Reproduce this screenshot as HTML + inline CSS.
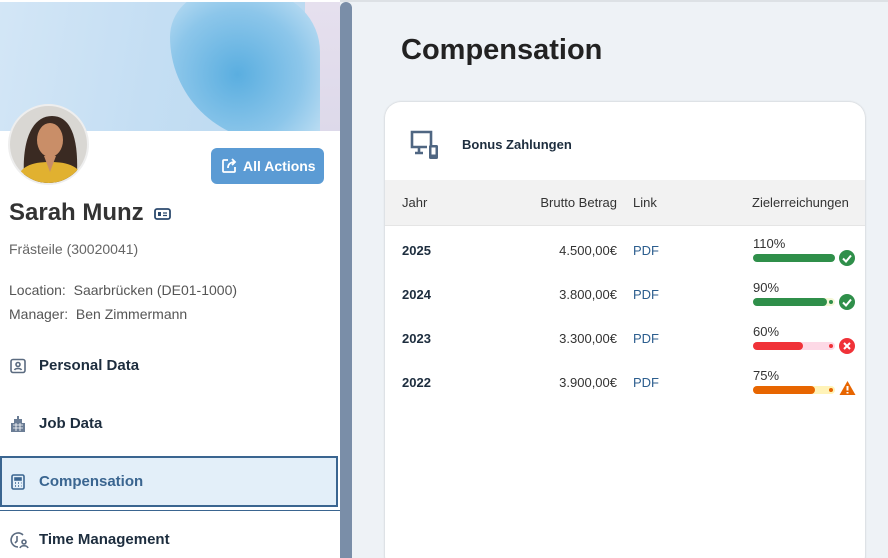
<!DOCTYPE html>
<html><head><meta charset="utf-8"><style>
*{box-sizing:border-box;margin:0;padding:0}
html,body{width:888px;height:558px;overflow:hidden}
body{font-family:"Liberation Sans",sans-serif;background:#eef2f6;position:relative;color:#1d2d3e}
#left{position:absolute;left:0;top:0;width:340px;height:558px;background:#fff;overflow:hidden}
#hdr{position:absolute;left:0;top:2px;width:340px;height:129px;background:linear-gradient(100deg,#d3e6f6 0%,#c4def3 45%,#b9d8f0 100%);overflow:hidden}
#ice{position:absolute;left:170px;top:-10px;width:150px;height:150px;background:radial-gradient(ellipse at 45% 55%,#5aaee0,#8cc6ea 55%,#cfe6f6);border-radius:30% 40% 0 70%}
#sky{position:absolute;left:305px;top:0;width:35px;height:129px;background:linear-gradient(#e6e0ee,#ddd9ea)}
#sb{position:absolute;left:340px;top:2px;width:12px;height:556px;background:#7a8ea8;border-radius:6px 6px 0 0}
#av{position:absolute;left:8px;top:104px;width:81px;height:81px;border-radius:50%;overflow:hidden;border:2px solid #eee;background:#d9d7d3}
#btn{position:absolute;left:211px;top:148px;width:113px;height:36px;background:#5b9bd4;border-radius:6px;color:#fff;font-weight:bold;font-size:14px;line-height:36px;padding-left:32px}
#btn svg{position:absolute;left:10px;top:10px}
.t{position:absolute;white-space:nowrap}
.nav{position:absolute;left:0;width:340px;height:52px;font-weight:bold;font-size:15px;line-height:52px;padding-left:39px}
.nav svg{position:absolute;left:9px;top:17px}
#card{position:absolute;left:385px;top:102px;width:480px;height:470px;background:#fff;border-radius:16px;box-shadow:0 0 2px rgba(0,0,0,.2)}
#th{position:absolute;left:0;top:78px;width:480px;height:46px;background:#f2f2f2;border-bottom:1px solid #e5e5e5;font-size:13px;color:#333}
.row{position:absolute;left:0;width:480px;height:44px;font-size:13px}
.bar{position:absolute;left:368px;height:8px;border-radius:4px}
</style></head><body>
<div style="position:absolute;left:0;top:0;width:888px;height:2px;background:#dde1e5"></div>
<div id="left">
<div id="hdr"><div id="sky"></div><div id="ice"></div></div>
<div id="av"><svg width="81" height="81" viewBox="0 0 81 81"><path d="M15 81C10 40 20 10 42 10S70 40 66 81z" fill="#3a2a22"/><ellipse cx="40" cy="34" rx="13" ry="17" fill="#c98e68"/><path d="M5 81c2-20 15-25 35-25s33 5 36 25z" fill="#e1b130"/><path d="M34 50h12l-6 16z" fill="#c98e68"/></svg></div>
<div id="btn"><svg width="16" height="16" viewBox="0 0 16 16" fill="none" stroke="#fff" stroke-width="1.8"><path d="M7 2H3a1 1 0 0 0-1 1v10a1 1 0 0 0 1 1h10a1 1 0 0 0 1-1V9"/><path d="M7 10c0-4 3-6 7-6M11 1l3 3-3 3"/></svg>All Actions</div>
<div class="t" style="left:9px;top:199px;font-size:24px;font-weight:bold;color:#333">Sarah Munz</div>
<svg class="t" style="left:154px;top:208px" width="17" height="12" viewBox="0 0 17 12"><rect x="1" y="1" width="15" height="10" rx="2" fill="none" stroke="#2c4a6e" stroke-width="1.8"/><rect x="4" y="4" width="3" height="4" fill="#2c4a6e"/><path d="M9 5h4M9 7.5h4" stroke="#2c4a6e" stroke-width="1.3"/></svg>
<div class="t" style="left:9px;top:241px;font-size:14px;color:#666">Frästeile (30020041)</div>
<div class="t" style="left:9px;top:282px;font-size:14px;color:#555">Location:&nbsp; Saarbrücken (DE01-1000)</div>
<div class="t" style="left:9px;top:306px;font-size:14px;color:#555">Manager:&nbsp; Ben Zimmermann</div>
<div class="nav" style="top:340px"><svg width="18" height="16" viewBox="0 0 18 16" fill="none" stroke="#5b6b80" stroke-width="1.6" style="top:18px"><rect x="2" y="1.5" width="14" height="13" rx="2"/><circle cx="9" cy="6.5" r="2"/><path d="M5.5 12c1-2 6-2 7 0"/></svg>Personal Data</div>
<div class="nav" style="top:398px"><svg width="18" height="18" viewBox="0 0 18 18" fill="#6b7d95" style="top:17px"><path d="M8 1h2v3h3v4h3v9H2V8h3V4h3z"/><path d="M4 10h10M4 13h10M7 8v8M11 8v8" stroke="#fff" stroke-width=".8"/></svg>Job Data</div>
<div class="nav" style="top:456px;background:#e3eff9;border:2px solid #3a6590;color:#3a6590;height:51px;line-height:47px;width:338px;padding-left:37px"><svg width="14" height="16" viewBox="0 0 14 16" fill="none" stroke="#3a6590" stroke-width="1.6" style="top:16px;left:9px"><rect x="1" y="1" width="12" height="14" rx="1.5"/><rect x="4" y="4" width="6" height="2" fill="#3a6590"/><path d="M4 9h1M7 9h1M10 9h0.5M4 12h1M7 12h1M10 12h.5"/></svg>Compensation</div>
<div style="position:absolute;left:0;top:510px;width:340px;height:1px;background:#3a6590"></div>
<div class="nav" style="top:514px"><svg width="20" height="18" viewBox="0 0 20 18" fill="none" stroke="#5b6b80" stroke-width="1.6" style="top:17px"><path d="M14 4A7 7 0 1 0 9 16"/><path d="M8 5v5l-2 2"/><circle cx="15" cy="11" r="2"/><path d="M11 17c1-3 7-3 8 0"/></svg>Time Management</div>
</div>
<div id="sb"></div>
<div class="t" style="left:401px;top:34px;font-size:29px;font-weight:bold;color:#222">Compensation</div>
<div id="card">
<svg class="t" style="left:24px;top:27px" width="34" height="30" viewBox="0 0 34 30" fill="none" stroke="#4f6682" stroke-width="2.6"><path d="M22 16V3H3v15h15M10 18v5M6 24h8"/><rect x="20" y="16" width="9" height="14" rx="1.5" fill="#4f6682" stroke="none"/><rect x="22.5" y="18.5" width="4" height="7" fill="#fff" stroke="none"/></svg>
<div class="t" style="left:77px;top:35px;font-size:13px;font-weight:bold">Bonus Zahlungen</div>
<div id="th"><span class="t" style="left:17px;top:15px">Jahr</span><span class="t" style="right:248px;top:15px">Brutto Betrag</span><span class="t" style="left:248px;top:15px">Link</span><span class="t" style="left:367px;top:15px">Zielerreichungen</span></div>
<div class="row" style="top:126px"><span class="t" style="left:17px;top:15px;font-weight:bold">2025</span><span class="t" style="right:248px;top:15px;color:#333">4.500,00€</span><span class="t" style="left:248px;top:15px;color:#2c5e8e">PDF</span><span class="t" style="left:368px;top:8px;color:#333">110%</span><div class="bar" style="top:26px;width:82px;background:#2f8f4a"></div><svg class="t" style="left:454px;top:22px" width="16" height="16"><circle cx="8" cy="8" r="8" fill="#2f8f4a"/><path d="M4 8.5l3 3 5-6" stroke="#fff" stroke-width="2" fill="none"/></svg></div>
<div class="row" style="top:170px"><span class="t" style="left:17px;top:15px;font-weight:bold">2024</span><span class="t" style="right:248px;top:15px;color:#333">3.800,00€</span><span class="t" style="left:248px;top:15px;color:#2c5e8e">PDF</span><span class="t" style="left:368px;top:8px;color:#333">90%</span><div class="bar" style="top:26px;width:82px;background:#f4f8d8"></div><div class="bar" style="top:26px;width:74px;background:#2f8f4a"></div><div class="bar" style="top:28px;left:444px;width:4px;height:4px;background:#2f8f4a"></div><svg class="t" style="left:454px;top:22px" width="16" height="16"><circle cx="8" cy="8" r="8" fill="#2f8f4a"/><path d="M4 8.5l3 3 5-6" stroke="#fff" stroke-width="2" fill="none"/></svg></div>
<div class="row" style="top:214px"><span class="t" style="left:17px;top:15px;font-weight:bold">2023</span><span class="t" style="right:248px;top:15px;color:#333">3.300,00€</span><span class="t" style="left:248px;top:15px;color:#2c5e8e">PDF</span><span class="t" style="left:368px;top:8px;color:#333">60%</span><div class="bar" style="top:26px;width:82px;background:#fdd9e6"></div><div class="bar" style="top:26px;width:50px;background:#f03238"></div><div class="bar" style="top:28px;left:444px;width:4px;height:4px;background:#f03238"></div><svg class="t" style="left:454px;top:22px" width="16" height="16"><circle cx="8" cy="8" r="8" fill="#f03238"/><path d="M5 5l6 6M11 5l-6 6" stroke="#fff" stroke-width="2"/></svg></div>
<div class="row" style="top:258px"><span class="t" style="left:17px;top:15px;font-weight:bold">2022</span><span class="t" style="right:248px;top:15px;color:#333">3.900,00€</span><span class="t" style="left:248px;top:15px;color:#2c5e8e">PDF</span><span class="t" style="left:368px;top:8px;color:#333">75%</span><div class="bar" style="top:26px;width:82px;background:#fff3b8"></div><div class="bar" style="top:26px;width:62px;background:#e76500"></div><div class="bar" style="top:28px;left:444px;width:4px;height:4px;background:#e76500"></div><svg class="t" style="left:454px;top:20px" width="17" height="16"><path d="M8.5 1L16.5 15H.5z" fill="#e76500"/><path d="M8.5 6v4.5M8.5 12v1.5" stroke="#fff" stroke-width="2"/></svg></div>
</div>
</body></html>
